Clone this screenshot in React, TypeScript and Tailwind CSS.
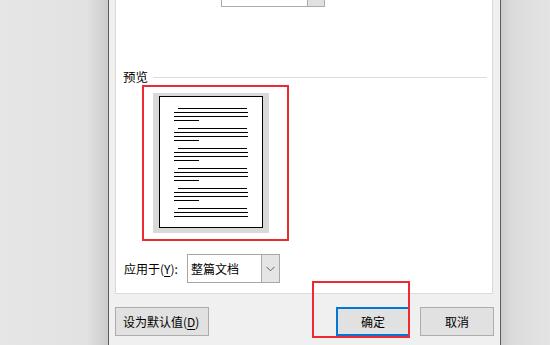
import React from "react";

function Line({ w, indent = 0, first = false }: { w: number; indent?: number; first?: boolean }) {
  return (
    <div
      className={first ? "h-px bg-black" : "h-px bg-black mt-[3px]"}
      style={{ width: w, marginLeft: indent }}
    />
  );
}

function Para({ last = false, first = false }: { last?: boolean; first?: boolean }) {
  return (
    <div className={first ? "" : "mt-[7px]"}>
      <Line w={69} indent={4} first />
      <Line w={74} />
      <Line w={74} />
      {!last && <Line w={25} />}
    </div>
  );
}

function Chevron() {
  return (
    <svg width="9" height="6" viewBox="0 0 9 6">
      <path d="M0.5 0.8 L4.5 4.8 L8.5 0.8" fill="none" stroke="#5f5f5f" strokeWidth="1" />
    </svg>
  );
}

export default function App() {
  return (
    <div className="w-[550px] h-[345px] flex overflow-hidden text-[12px] text-black font-['Noto_Sans_CJK_SC','Noto_Sans_CJK_SC',sans-serif] leading-none">
      <div className="w-[108px] h-full bg-[linear-gradient(to_right,#e6e6e6_0%,#e2e2e2_80%,#cbcbcb_100%)]" />
      <div className="w-px h-full bg-[#5c5c5c]" />
      <div className="w-[391px] h-full bg-[#f0f0f0] relative flex flex-col">
        {/* main panel */}
        <div className="ml-[6px] mr-[7px] h-[294px] bg-white border border-t-0 border-[#dadada] flex flex-col">
          {/* top cut-off combobox */}
          <div className="ml-[105px] w-[104px] h-[7px] border-x border-b border-[#ababab] flex">
            <div className="flex-1 bg-white" />
            <div className="w-[17px] border-l border-[#ababab] bg-[#e1e1e1]" />
          </div>

          {/* 预览 header */}
          <div className="mt-[62px] h-[16px] flex items-center pl-[7px] pr-[5px]">
            <span className="text-[12.5px]">预览</span>
            <div className="ml-[5px] flex-1 h-px bg-[#dcdcdc]" />
          </div>

          {/* preview */}
          <div className="relative ml-[37px] mt-[8px] w-[116px] h-[140px] bg-[#d9d9d9]">
            <div className="ml-[6px] mt-[3px] w-[104px] h-[132px] bg-white border border-black pl-[14px] pt-[11px]">
              <Para first />
              <Para />
              <Para />
              <Para />
              <Para />
              <Para last />
            </div>
            <div className="absolute left-[-11px] top-[-8px] w-[147px] h-[156px] border-2 border-[#ec2a2f]" />
          </div>

          {/* 应用于 */}
          <div className="mt-[21px] flex items-center pl-[8px]">
            <span className="w-[63px]">
              应用于(<span className="underline underline-offset-2">Y</span>):
            </span>
            <div className="w-[93px] h-[29px] border border-[#a8a8a8] flex bg-white">
              <div className="flex-1 flex items-center pl-[3px]">整篇文档</div>
              <div className="w-[18px] border-l border-[#a8a8a8] bg-[#e5e5e5] flex items-center justify-center">
                <Chevron />
              </div>
            </div>
          </div>
        </div>

        {/* buttons */}
        <div className="mt-[13px] flex items-center pl-[6px] pr-[6px]">
          <div className="w-[94px] h-[29px] bg-[#e1e1e1] border border-[#adadad] flex items-center pl-[7px]">
            设为默认值(<span className="underline underline-offset-2">D</span>)
          </div>
          <div className="flex-1" />
          <div className="w-[74px] h-[29px] bg-[#e1e1e1] border-2 border-[#0078d7] flex items-center justify-center">
            确定
          </div>
          <div className="ml-[10px] w-[74px] h-[29px] bg-[#e1e1e1] border border-[#adadad] flex items-center justify-center">
            取消
          </div>
        </div>

        {/* annotation around OK */}
        <div className="absolute left-[203px] top-[281px] w-[98px] h-[57px] border-2 border-[#ec2a2f]" />
      </div>
      <div className="w-px h-full bg-[#5c5c5c]" />
      <div className="flex-1 h-full bg-[linear-gradient(to_right,#cdcdcd_0%,#dcdcdc_25%,#e4e4e4_100%)]" />
    </div>
  );
}
